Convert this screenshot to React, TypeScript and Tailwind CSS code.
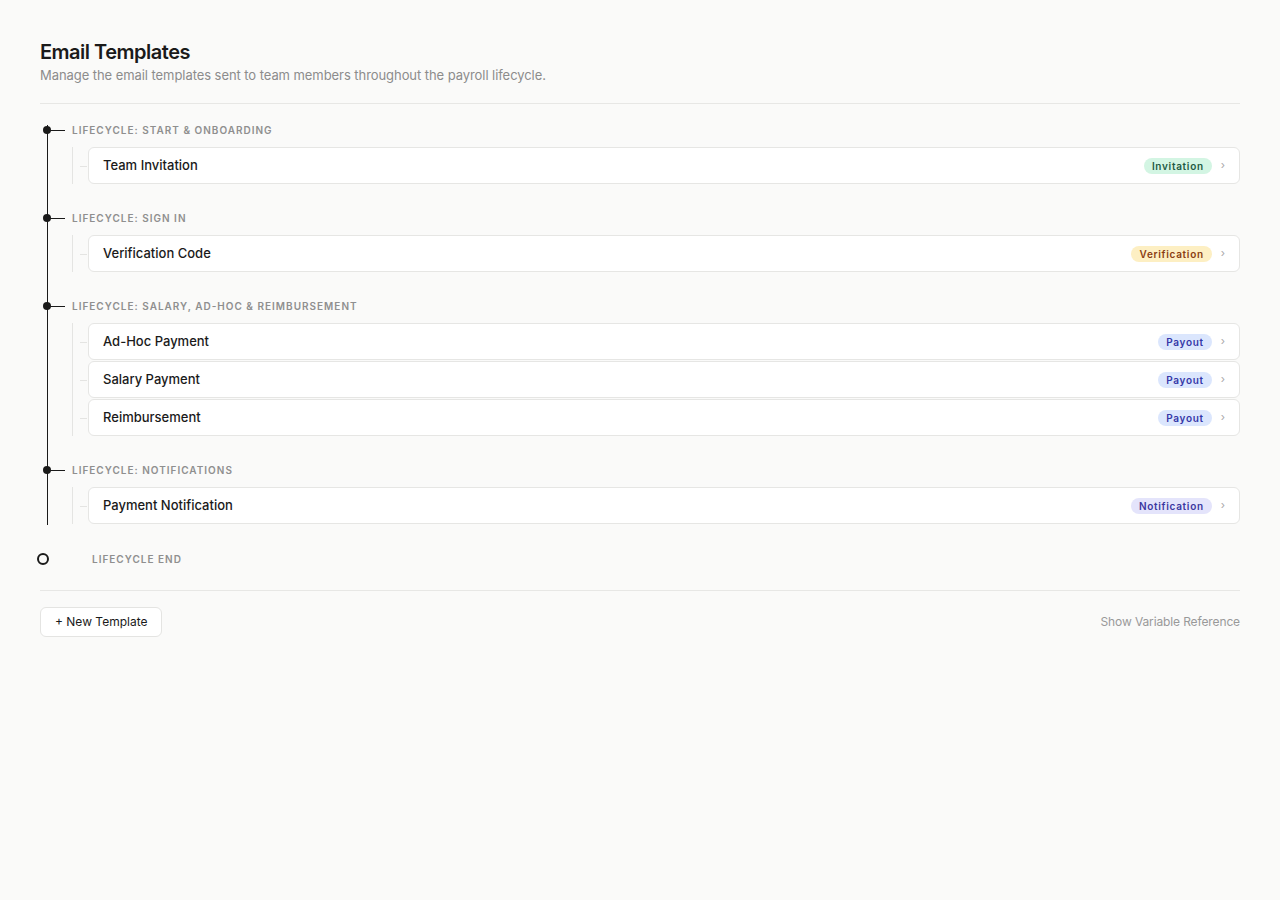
import React from "react";

type Item = { name: string; badge: string; kind: "invite" | "verify" | "payout" | "notify" };
type Section = { label: string; items: Item[] };

const sections: Section[] = [
  { label: "Lifecycle: Start & Onboarding", items: [{ name: "Team Invitation", badge: "Invitation", kind: "invite" }] },
  { label: "Lifecycle: Sign In", items: [{ name: "Verification Code", badge: "Verification", kind: "verify" }] },
  {
    label: "Lifecycle: Salary, Ad-Hoc & Reimbursement",
    items: [
      { name: "Ad-Hoc Payment", badge: "Payout", kind: "payout" },
      { name: "Salary Payment", badge: "Payout", kind: "payout" },
      { name: "Reimbursement", badge: "Payout", kind: "payout" },
    ],
  },
  { label: "Lifecycle: Notifications", items: [{ name: "Payment Notification", badge: "Notification", kind: "notify" }] },
];

const badgeClass: Record<Item["kind"], string> = {
  invite: "bg-[#d3f5e3] text-[#1e5a44]",
  verify: "bg-[#fdefc3] text-[#8a3d12]",
  payout: "bg-[#dbe6fd] text-[#3538a8]",
  notify: "bg-[#e4e4fb] text-[#3b37a0]",
};

function Card({ item }: { item: Item }) {
  return (
    <div className="relative">
      <span className="absolute left-[-8px] top-1/2 h-px w-[7px] bg-[#e4e4e2]" />
      <div className="flex h-[37px] items-center rounded-[6px] border border-[#e6e6e4] bg-white pl-[14px] pr-[14px]">
        <span className="text-[13px] font-medium text-[#1a1a1a]">{item.name}</span>
        <span
          className={`ml-auto rounded-full px-[8px] text-[10px] leading-[16px] font-semibold tracking-[0.07em] ${badgeClass[item.kind]}`}
        >
          {item.badge}
        </span>
        <span className="ml-[9px] text-[11px] leading-none text-[#a8a8a8]">›</span>
      </div>
    </div>
  );
}

export default function App() {
  return (
    <div
      className="min-h-[900px] bg-[#fafaf9] px-10 pt-[38px]"
      style={{ fontFamily: "Inter, 'Noto Sans', sans-serif" }}
    >
      <h1 className="text-[20px] leading-[28px] font-semibold text-[#1a1a1a] tracking-[-0.025em]">Email Templates</h1>
      <p className="text-[13px] leading-[20px] text-[#8c8c8c] -mt-px tracking-[-0.005em]">
        Manage the email templates sent to team members throughout the payroll lifecycle.
      </p>
      <div className="mt-[18px] border-t border-[#e7e7e5]" />

      <div className="relative mt-[19px] flex flex-col gap-[27px]">
        <span className="absolute left-[6.5px] top-[2px] -bottom-[1px] w-px bg-[#1a1a1a]" />
        {sections.map((s) => (
          <div key={s.label} className="flex flex-col">
            <div className="relative flex h-[14px] items-center pl-[32px]">
              <span className="absolute left-[3px] top-1/2 h-2 w-2 -translate-y-1/2 rounded-full bg-[#1a1a1a]" />
              <span className="absolute left-[7px] top-1/2 h-px w-[18px] bg-[#1a1a1a]" />
              <span className="text-[10px] font-semibold uppercase tracking-[0.1em] text-[#8f8f8f]">{s.label}</span>
            </div>
            <div className="ml-[32px] mt-[10px] flex flex-col gap-px border-l border-[#e4e4e2] pl-[15px]">
              {s.items.map((it) => (
                <Card key={it.name} item={it} />
              ))}
            </div>
          </div>
        ))}
      </div>

      <div className="mt-[29px] flex h-[12px] items-center">
        <span className="ml-[-3px] h-[12px] w-[12px] rounded-full border-2 border-[#1a1a1a]" />
        <span className="ml-[43px] text-[10px] font-semibold uppercase tracking-[0.1em] text-[#8f8f8f]">
          Lifecycle End
        </span>
      </div>

      <div className="mt-[25px] flex items-center justify-between border-t border-[#e7e7e5] pt-[16px]">
        <button className="h-[30px] rounded-[6px] border border-[#e4e4e2] bg-white px-[14px] text-[12px] text-[#1a1a1a]">
          + New Template
        </button>
        <span className="text-[12px] text-[#999999] tracking-[-0.01em]">Show Variable Reference</span>
      </div>
    </div>
  );
}
